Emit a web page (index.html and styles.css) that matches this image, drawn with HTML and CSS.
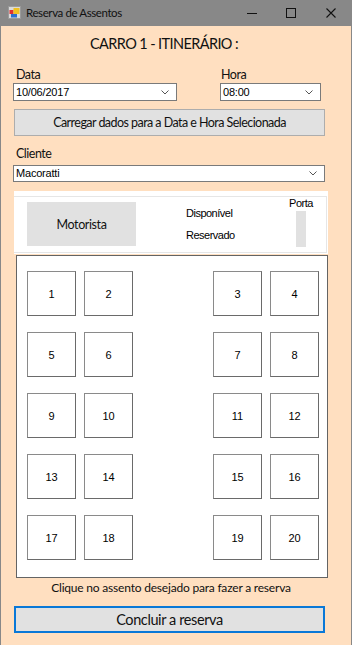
FILE: index.html
```html
<!DOCTYPE html>
<html lang="pt">
<head>
<meta charset="utf-8">
<title>Reserva de Assentos</title>
<link rel="stylesheet" href="styles.css">
</head>
<body>
<div class="window">
  <div class="titlebar">
    <svg class="app-icon" width="13" height="13" viewBox="0 0 13 13">
      <rect x="0.5" y="0.5" width="12" height="12" fill="#d9d9d9" stroke="#9a9a9a"/>
      <rect x="1.5" y="4" width="4" height="4" fill="#e03030"/>
      <rect x="5.5" y="2" width="6" height="6" fill="#f0c020"/>
      <rect x="3" y="8" width="6" height="3.5" fill="#2a6fd0"/>
    </svg>
    <span class="window-title">Reserva de Assentos</span>
    <div class="controls">
      <svg class="ctl" width="12" height="12" viewBox="0 0 12 12"><line x1="1" y1="6.5" x2="11" y2="6.5" stroke="#111" stroke-width="1"/></svg>
      <svg class="ctl" width="12" height="12" viewBox="0 0 12 12"><rect x="1.5" y="1.5" width="9" height="9" fill="none" stroke="#111" stroke-width="1"/></svg>
      <svg class="ctl" width="12" height="12" viewBox="0 0 12 12"><path d="M1.5 1.5 L10.5 10.5 M10.5 1.5 L1.5 10.5" stroke="#111" stroke-width="1.1"/></svg>
    </div>
  </div>
  <div class="client">
    <h1 class="heading">CARRO 1 - ITINERÁRIO :</h1>
    <div class="fields">
      <div class="field field-date">
        <label class="label">Data</label>
        <div class="combo"><span class="combo-text">10/06/2017</span><svg class="chev" width="8" height="5" viewBox="0 0 8 5"><path d="M0.5 0.5 L4 4 L7.5 0.5" fill="none" stroke="#555" stroke-width="1"/></svg></div>
      </div>
      <div class="field field-hour">
        <label class="label label-hour">Hora</label>
        <div class="combo"><span class="combo-text">08:00</span><svg class="chev" width="8" height="5" viewBox="0 0 8 5"><path d="M0.5 0.5 L4 4 L7.5 0.5" fill="none" stroke="#555" stroke-width="1"/></svg></div>
      </div>
    </div>
    <button class="btn btn-load">Carregar dados para a Data e Hora Selecionada</button>
    <div class="field field-client">
      <label class="label">Cliente</label>
      <div class="combo combo-client"><span class="combo-text">Macoratti</span><svg class="chev" width="8" height="5" viewBox="0 0 8 5"><path d="M0.5 0.5 L4 4 L7.5 0.5" fill="none" stroke="#555" stroke-width="1"/></svg></div>
    </div>
    <div class="legend-panel">
      <div class="legend-inner">
        <div class="driver">Motorista</div>
        <div class="legend">
          <span class="legend-item">Disponível</span>
          <span class="legend-item">Reservado</span>
        </div>
        <div class="door">
          <span class="door-label">Porta</span>
          <span class="door-bar"></span>
        </div>
      </div>
    </div>
    <div class="seats">
      <div class="seat">1</div><div class="seat">2</div><div class="seat">3</div><div class="seat">4</div>
      <div class="seat">5</div><div class="seat">6</div><div class="seat">7</div><div class="seat">8</div>
      <div class="seat">9</div><div class="seat">10</div><div class="seat">11</div><div class="seat">12</div>
      <div class="seat">13</div><div class="seat">14</div><div class="seat">15</div><div class="seat">16</div>
      <div class="seat">17</div><div class="seat">18</div><div class="seat">19</div><div class="seat">20</div>
    </div>
    <p class="hint">Clique no assento desejado para fazer a reserva</p>
    <button class="btn btn-conclude">Concluir a reserva</button>
  </div>
</div>
</body>
</html>
```

FILE: styles.css
```css
* { box-sizing: border-box; }
html, body { margin: 0; padding: 0; }
body { width: 352px; height: 645px; overflow: hidden; background: #ffdfc0; font-family: Lato, "Noto Sans", sans-serif; color: #000; }

.window { width: 352px; height: 645px; display: flex; flex-direction: column; border-left: 1px solid #888; border-right: 1px solid #888; background: #ffdfc0; }

.titlebar { height: 26px; flex: none; background: #888888; display: flex; align-items: center; margin: 0 -1px; padding-left: 8px; }
.app-icon { flex: none; margin-top: -1px; }
.window-title { margin-left: 5px; font-size: 11.5px; letter-spacing: -0.4px; color: #111; line-height: 16px; }
.controls { margin-left: auto; display: flex; align-items: center; }
.ctl { flex: none; }
.controls .ctl:nth-child(1) { margin-right: 27px; }
.controls .ctl:nth-child(2) { margin-right: 28px; }
.controls .ctl:nth-child(3) { margin-right: 15px; }

.client { flex: 1; display: flex; flex-direction: column; }

.heading { margin: 9px 0 0; padding-right: 24px; text-align: center; font-weight: normal; font-size: 14.5px; letter-spacing: -0.6px; line-height: 18px; color: #111; }

.fields { display: flex; margin-top: 14px; }
.field { display: flex; flex-direction: column; }
.field-date { margin-left: 12px; width: 164px; }
.field-hour { margin-left: 43px; width: 101px; }
.label { font-size: 12.5px; letter-spacing: -0.5px; line-height: 15px; padding-left: 3px; color: #111; }
.label-hour { padding-left: 1px; }

.combo { margin-top: 1px; height: 18px; background: #fff; border: 1px solid #7a7a7a; display: flex; align-items: center; padding: 0 7px 0 2px; }
.combo-text { font-family: "Liberation Sans", Arial, sans-serif; font-size: 11px; line-height: 13px; letter-spacing: -0.2px; }
.chev { margin-left: auto; flex: none; }

.btn { display: block; font-family: Lato, "Noto Sans", sans-serif; color: #111; background: #e1e1e1; border: 1px solid #adadad; padding: 0; }
.btn-load { margin: 8px 0 0 13px; width: 311px; height: 27px; font-size: 12.5px; letter-spacing: -0.55px; }

.field-client { margin-left: 12px; width: 312px; margin-top: 10px; }
.combo-client { margin-top: 4px; height: 17px; }

.legend-panel { margin: 9px 0 0 13px; width: 314px; height: 63px; background: #fff; padding-top: 5px; }
.legend-inner { height: 57px; border: 1px solid #e6e6e6; border-left: none; margin-right: 1px; display: flex; padding-top: 5px; }
.driver { margin-left: 13px; width: 109px; height: 44px; background: #e1e1e1; display: flex; align-items: center; justify-content: center; font-size: 12.5px; letter-spacing: -0.4px; color: #111; }
.legend { margin-left: 50px; display: flex; flex-direction: column; padding-top: 5px; }
.legend-item { font-family: "Liberation Sans", Arial, sans-serif; font-size: 11px; line-height: 13px; letter-spacing: -0.5px; }
.legend-item + .legend-item { margin-top: 9px; }
.door { margin-left: auto; margin-right: 14px; width: 22px; display: flex; flex-direction: column; align-items: center; margin-top: -5px; }
.door-label { font-family: "Liberation Sans", Arial, sans-serif; font-size: 11px; line-height: 13px; letter-spacing: -0.5px; }
.door-bar { margin-top: 1px; width: 10px; height: 36px; background: #e1e1e1; }

.seats { margin: 1px 0 0 15px; width: 312px; height: 323px; background: #fff; border: 1px solid #646464; padding: 15px 0 0 10px; display: grid; grid-template-columns: 49px 49px 64px 49px 49px; grid-auto-rows: 45px; column-gap: 8px; row-gap: 16px; align-content: start; }
.seat { border: 1px solid #7a7a7a; border-color: #8a8a8a #6a6a6a #6a6a6a #8a8a8a; display: flex; align-items: center; justify-content: center; font-family: "Liberation Sans", Arial, sans-serif; font-size: 11px; }
.seat:nth-child(4n+3) { grid-column: 4; }

.hint { margin: 2px 0 0; padding-right: 10px; text-align: center; font-size: 12px; letter-spacing: -0.2px; line-height: 15px; color: #111; }

.btn-conclude { margin: 11px 0 0 13px; width: 311px; height: 27px; border: 2px solid #0a78d7; font-size: 14.5px; letter-spacing: -0.4px; }
```
